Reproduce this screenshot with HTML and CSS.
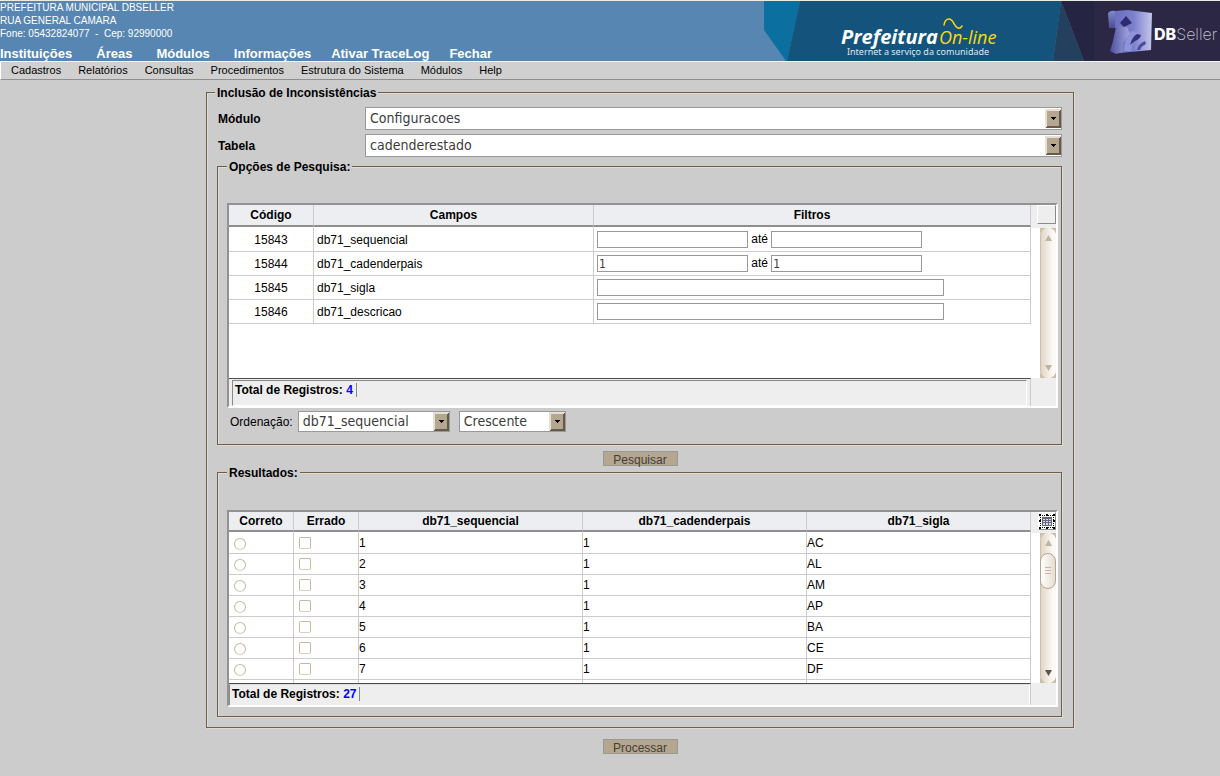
FILE: index.html
```
<!DOCTYPE html>
<html lang="pt-BR">
<head>
<meta charset="utf-8">
<title>DBSeller - Inclusão de Inconsistências</title>
<link rel="stylesheet" href="styles.css">
</head>
<body>
<header class="top">
  <div class="top-left">
    <address class="org">PREFEITURA MUNICIPAL DBSELLER<br>RUA GENERAL CAMARA<br>Fone: 05432824077 &nbsp;- &nbsp;Cep: 92990000</address>
    <nav class="nav-main">
      <a class="wide" href="#">Instituições</a><a class="wide" href="#">Áreas</a><a class="wide" href="#">Módulos</a><a href="#">Informações</a><a href="#">Ativar TraceLog</a><a href="#">Fechar</a>
    </nav>
  </div>
  <svg class="banner" width="456" height="60" viewBox="0 0 456 60" role="img" aria-label="Prefeitura On-line DBSeller">
    <defs>
      <linearGradient id="face" x1="0" y1="0" x2="1" y2="0">
        <stop offset="0" stop-color="#6a6fc0"/><stop offset=".5" stop-color="#7c80cc"/><stop offset="1" stop-color="#c3c6ec"/>
      </linearGradient>
      <linearGradient id="side" x1="0" y1="0" x2="0" y2="1">
        <stop offset="0" stop-color="#8387cb"/><stop offset="1" stop-color="#4a4d90"/>
      </linearGradient>
      <linearGradient id="foot" x1="0" y1="0" x2="1" y2="0">
        <stop offset="0" stop-color="#4a4f9e"/><stop offset="1" stop-color="#a5a9e0"/>
      </linearGradient>
    </defs>
    <path d="M0 0H36L23 60H22L0 29Z" fill="#0b6fa0"/>
    <path d="M36 0H297L289 60H23Z" fill="#14547c"/>
    <path d="M297 0L320 60H289Z" fill="#24405f"/>
    <path d="M297 0H456V60H320Z" fill="#262443"/>
    <path d="M330 0H456V60H330Z" fill="#2c2745"/>
    <path d="M344 12Q346 9 352 10V27L345 27Z" fill="url(#side)"/>
    <path d="M351 10L364 9L388 12L387 49L356 52L355 33L351 26Z" fill="url(#face)"/>
    <path d="M352 26L363 26L366 33L359 42V51L352 53L346 50L349 40Z" fill="url(#foot)"/>
    <path d="M356 22L362 15L368 22L360 26Z" fill="#2e2a72"/>
    <path d="M360 50Q360 38 368 30L377 32Q368 40 367 50Z" fill="#8f93d8"/>
    <path d="M366 44Q368 36 373 33L377 34Q376 38 371 40Z" fill="#34327c"/>
    <path d="M373 49Q374 43 381 40L382 43Q377 45 376 49Z" fill="#4b4d9d"/>
    <text class="brand-a" x="77" y="43">Prefeitura</text>
    <text class="brand-b" x="175" y="43">On-line</text>
    <path d="M180 24Q181 18 185 18C190 18 189 25 194 27Q196 28 198 25" fill="none" stroke="#fbd90f" stroke-width="1.5" stroke-linecap="round"/>
    <text class="brand-c" x="83" y="54">Internet a serviço da comunidade</text>
    <text class="brand-d" x="390" y="39"><tspan class="db">DB</tspan><tspan class="seller">Seller</tspan></text>
  </svg>
</header>
<nav class="nav-sub">
  <a href="#">Cadastros</a><a href="#">Relatórios</a><a href="#">Consultas</a><a href="#">Procedimentos</a><a href="#">Estrutura do Sistema</a><a href="#">Módulos</a><a href="#">Help</a>
</nav>
<main class="page">
  <form class="form">
    <fieldset class="box box-outer">
      <legend>Inclusão de Inconsistências</legend>
      <div class="fields">
        <label for="modulo">Módulo</label>
        <select id="modulo"><option>Configuracoes</option></select>
        <label for="tabela">Tabela</label>
        <select id="tabela"><option>cadenderestado</option></select>
      </div>

      <fieldset class="box box-search">
        <legend>Opções de Pesquisa:</legend>
        <div class="grid grid-search">
          <div class="grid-view">
            <div class="grid-clip">
              <table>
                <colgroup><col class="c-code"><col class="c-field"><col></colgroup>
                <thead><tr><th>Código</th><th>Campos</th><th>Filtros</th></tr></thead>
                <tbody>
                  <tr><td>15843</td><td>db71_sequencial</td><td><input type="text" aria-label="db71_sequencial de"> até <input type="text" aria-label="db71_sequencial até"></td></tr>
                  <tr><td>15844</td><td>db71_cadenderpais</td><td><input type="text" value="1" aria-label="db71_cadenderpais de"> até <input type="text" value="1" aria-label="db71_cadenderpais até"></td></tr>
                  <tr><td>15845</td><td>db71_sigla</td><td><input class="long" type="text" aria-label="db71_sigla"></td></tr>
                  <tr><td>15846</td><td>db71_descricao</td><td><input class="long" type="text" aria-label="db71_descricao"></td></tr>
                </tbody>
              </table>
            </div>
            <div class="grid-side">
              <div class="corner"><button type="button" class="pick" aria-label="Colunas"></button></div>
              <div class="scroll">
                <svg width="7" height="6" viewBox="0 0 7 6"><path d="M3.500 0L7 6H0Z"/></svg>
                <svg width="7" height="6" viewBox="0 0 7 6"><path d="M3.500 6L7 0H0Z"/></svg>
              </div>
            </div>
          </div>
          <div class="grid-foot"><div class="foot-area"><div class="foot-box"><span class="total">Total de Registros: <b>4</b></span></div></div></div>
        </div>
        <div class="order">
          <label for="ordem">Ordenação:</label>
          <select id="ordem" class="by"><option>db71_sequencial</option></select>
          <select class="dir" aria-label="Sentido"><option>Crescente</option></select>
        </div>
      </fieldset>

      <div class="action action-inner"><button type="button" class="btn">Pesquisar</button></div>

      <fieldset class="box box-result">
        <legend>Resultados:</legend>
        <div class="grid grid-result">
          <div class="grid-view">
            <div class="grid-clip">
              <table>
                <colgroup><col class="c-mark"><col class="c-mark"><col><col><col></colgroup>
                <thead><tr><th>Correto</th><th>Errado</th><th>db71_sequencial</th><th>db71_cadenderpais</th><th>db71_sigla</th></tr></thead>
                <tbody>
                  <tr><td><input type="radio" name="r1" aria-label="Correto 1"></td><td><input type="checkbox" aria-label="Errado 1"></td><td>1</td><td>1</td><td>AC</td></tr>
                  <tr><td><input type="radio" name="r2" aria-label="Correto 2"></td><td><input type="checkbox" aria-label="Errado 2"></td><td>2</td><td>1</td><td>AL</td></tr>
                  <tr><td><input type="radio" name="r3" aria-label="Correto 3"></td><td><input type="checkbox" aria-label="Errado 3"></td><td>3</td><td>1</td><td>AM</td></tr>
                  <tr><td><input type="radio" name="r4" aria-label="Correto 4"></td><td><input type="checkbox" aria-label="Errado 4"></td><td>4</td><td>1</td><td>AP</td></tr>
                  <tr><td><input type="radio" name="r5" aria-label="Correto 5"></td><td><input type="checkbox" aria-label="Errado 5"></td><td>5</td><td>1</td><td>BA</td></tr>
                  <tr><td><input type="radio" name="r6" aria-label="Correto 6"></td><td><input type="checkbox" aria-label="Errado 6"></td><td>6</td><td>1</td><td>CE</td></tr>
                  <tr><td><input type="radio" name="r7" aria-label="Correto 7"></td><td><input type="checkbox" aria-label="Errado 7"></td><td>7</td><td>1</td><td>DF</td></tr>
                  <tr><td></td><td></td><td></td><td></td><td></td></tr>
                </tbody>
              </table>
            </div>
            <div class="grid-side">
              <div class="corner"><button type="button" class="pick" aria-label="Colunas">
                <svg width="16" height="15" viewBox="0 0 16 15" shape-rendering="crispEdges">
                  <rect width="16" height="15" fill="#fff"/>
                  <path d="M3 1.500H14M3 13.500H14" stroke="#000" stroke-dasharray="1 1"/>
                  <path d="M1.500 3V12M14.500 3V12" stroke="#000" stroke-dasharray="1 1"/>
                  <path d="M0 0h2v2H0zM14 0h2v2h-2zM0 13h2v2H0zM14 13h2v2h-2zM7 0h2v2H7zM7 13h2v2H7zM0 6h2v2H0zM14 6h2v2h-2z"/>
                  <rect x="3" y="3" width="10" height="9" fill="#667"/>
                  <path d="M4 5h2v1H4zM7 5h2v1H7zM10 5h2v1h-2zM4 7h2v1H4zM7 7h2v1H7zM10 7h2v1h-2zM4 9h2v2H4zM7 9h2v2H7zM10 9h2v2h-2z" fill="#dde"/>
                </svg></button></div>
              <div class="scroll">
                <svg class="up" width="7" height="6" viewBox="0 0 7 6"><path d="M3.500 0L7 6H0Z"/></svg>
                <div class="thumb"></div>
                <svg class="down" width="7" height="6" viewBox="0 0 7 6"><path d="M3.500 6L7 0H0Z"/></svg>
              </div>
            </div>
          </div>
          <div class="grid-foot"><div class="foot-area"><div class="foot-box"><span class="total">Total de Registros: <b>27</b></span></div></div></div>
        </div>
      </fieldset>
    </fieldset>
    <div class="action action-last"><button type="button" class="btn">Processar</button></div>
  </form>
</main>
</body>
</html>
```
FILE: styles.css
```
* { box-sizing: border-box; }

body {
  margin: 0;
  background: #ccc;
  color: #000;
  font: 12px/14px "Liberation Sans", Arial, sans-serif;
}

a { color: inherit; text-decoration: none; }

/* top bar */
.top {
  display: flex;
  justify-content: space-between;
  height: 62px;
  background: #5786b2;
  border-top: 1px solid #ecebe0;
  border-bottom: 1px solid #f4f4f4;
  color: #fff;
  overflow: hidden;
}
.top-left { white-space: nowrap; }
.org { font: normal 10px/13px "Liberation Sans", Arial, sans-serif; }
.nav-main {
  display: flex;
  gap: 20px;
  margin-top: 6px;
  font-size: 13px;
  line-height: 16px;
  font-weight: bold;
}
.nav-main .wide { margin-right: 4px; }
.banner { display: block; flex: none; }
.brand-a { font: italic bold 20px "Open Sans", sans-serif; fill: #fff; }
.brand-b { font: italic 18px "Open Sans", sans-serif; fill: #fbd90f; }
.brand-c { font: 9px "Noto Sans", sans-serif; fill: #dce8f0; }
.brand-d { font: 16px Inter, sans-serif; }
.db { font-weight: 800; fill: #fff; }
.seller { font-weight: 200; fill: #c8c6d4; }

.nav-sub {
  display: flex;
  gap: 17px;
  padding: 1px 10px 2px;
  background: #d0d0d0;
  border-left: 1px solid #fff;
  border-bottom: 1px solid #909090;
  font-size: 11px;
}

/* page */
.page { padding: 6px 0 21px 60px; }
.form { max-width: 868px; margin: 0 auto; }

.box {
  min-width: 0;
  margin: 0;
  border: 1px solid #6b5f4f;
  box-shadow: 1px 1px 0 #e2dccf, inset 1px 1px 0 #e2dccf;
}
.box legend {
  height: 13px;
  padding: 0 2px;
  background: #ccc;
  font-weight: bold;
  line-height: 15px;
}
.box-outer { padding: 8px 11px 10px 10px; }
.box-outer > legend { margin-left: -2px; }
.box-search { margin-top: 3px; padding: 30px 3px 12px 9px; }
.box-result { padding: 31px 3px 9px 9px; }

.fields {
  display: grid;
  grid-template-columns: 147px 1fr;
  row-gap: 4px;
  align-items: center;
  padding-left: 1px;
  font-weight: bold;
}

select {
  appearance: none;
  height: 23px;
  margin: 0;
  padding: 0 20px 2px 4px;
  border: 1px solid #999;
  border-radius: 0;
  color: #3c3c3c;
  font: 14px/18px "DejaVu Sans Condensed", "DejaVu Sans", sans-serif;
  background: #fff url("data:image/svg+xml,%3Csvg xmlns='http://www.w3.org/2000/svg' width='16' height='19' shape-rendering='crispEdges'%3E%3Cpath fill='%23b5a690' d='M0 0h16v19H0z'/%3E%3Cpath fill='%23e6dfd3' d='M0 0h16l-2 2H2v15l-2 2z'/%3E%3Cpath fill='%23665a4a' d='M16 0v19H0l2-2h12V2z'/%3E%3Cpath d='M6 8h5v1H6zM7 9h3v1H7zM8 10h1v1H8z'/%3E%3C/svg%3E") right center no-repeat;
}

/* data grids */
.grid {
  border: 2px solid #fff;
  border-top-color: #929292;
  border-left-color: #929292;
  background: #fff;
}
.grid-view { display: flex; }
.grid-clip { flex: 1; min-width: 0; overflow: hidden; }
.grid-search .grid-clip { height: 173px; }
.grid-result .grid-clip { height: 171px; }
.grid-side { display: flex; flex-direction: column; width: 25px; }

table {
  width: 100%;
  table-layout: fixed;
  border-collapse: separate;
  border-spacing: 0;
}
.c-code { width: 85px; }
.c-field { width: 280px; }
.c-mark { width: 65px; }
th {
  height: 22px;
  padding: 0;
  background: #edeef2;
  border-right: 1px solid #ccc;
  border-bottom: 2px solid #8f8f8f;
}
.grid-result th { height: 20px; }
td {
  height: 24px;
  padding: 0 3px;
  border-right: 1px solid #ccc;
  border-bottom: 1px solid #ccc;
}
.grid-search td:first-child { text-align: center; }
.grid-search tr:first-child td { height: 25px; border-top: 1px solid #fff; }
.grid-result td { height: 21px; padding: 0; }
.grid-result tr:first-child td { height: 22px; border-top: 1px solid #fff; }

input[type="text"] {
  width: 151px;
  height: 17px;
  margin: 0;
  padding: 0 1px;
  border: 1px solid #999;
  border-radius: 0;
  background: #fff;
  color: #3c3c3c;
  font: 12px/14px "DejaVu Sans Condensed", "DejaVu Sans", sans-serif;
  vertical-align: middle;
}
input[type="text"].long { width: 347px; }

input[type="radio"],
input[type="checkbox"] {
  appearance: none;
  display: block;
  width: 12px;
  height: 12px;
  margin: 0 5px;
  border: 1px solid #c4b8a5;
  border-bottom-color: #d8cfc0;
  border-radius: 2px;
  background: #fff;
}
input[type="radio"] { margin-top: 2px; border-radius: 50%; }

.corner {
  display: flex;
  justify-content: flex-end;
  height: 23px;
  background: #eee;
}
.grid-result .corner { height: 21px; }
.pick {
  display: flex;
  align-items: center;
  justify-content: center;
  width: 19px;
  height: 19px;
  padding: 0;
  border: 1px solid #fff;
  border-right-color: #8a8a8a;
  border-bottom-color: #8a8a8a;
  background: #eee;
}
.grid-result .pick { width: 18px; height: 18px; }
.pick svg { flex: none; }

.scroll {
  flex: 1;
  display: flex;
  flex-direction: column;
  align-items: center;
  justify-content: space-between;
  width: 16px;
  margin-left: 9px;
  padding: 7px 0 7px;
  border-left: 1px solid #cbbfa8;
  border-radius: 8px;
  background: linear-gradient(90deg, #e2d7c8, #fbf9f6 80%);
  box-shadow: 0 0 0 8px #cbbfa8;
  clip-path: inset(0);
  fill: #c0b49e;
}
.scroll .up { margin-bottom: 7px; }
.scroll .down { margin-top: auto; fill: #5c554b; }
.thumb {
  width: 16px;
  height: 36px;
  margin-left: -1px;
  border: 1px solid #b5a690;
  border-radius: 8px;
  background:
    linear-gradient(#c5b9a5, #c5b9a5) center 13px / 6px 1px no-repeat,
    linear-gradient(#c5b9a5, #c5b9a5) center 16px / 6px 1px no-repeat,
    linear-gradient(#c5b9a5, #c5b9a5) center 19px / 6px 1px no-repeat,
    linear-gradient(90deg, #fff, #e6ddcf);
}

.grid-foot { padding-right: 25px; background: #eee; }
.foot-area {
  border-top: 1px solid #4c4c4c;
  border-right: 1px solid #ccc;
}
.foot-box {
  padding: 2px;
  border: 1px solid #fff;
  border-top-color: #8a8a8a;
  border-left-color: #8a8a8a;
}
.grid-search .foot-area { padding: 1px 3px 0; }
.grid-search .foot-box { height: 26px; }
.grid-result .foot-box {
  height: 21px;
  border-top-color: #ddd;
  border-bottom: 0;
}
.total {
  display: inline-block;
  padding-right: 3px;
  border-right: 1px solid #888;
  font-weight: bold;
}
.total b { color: #00f; }

.order {
  display: flex;
  align-items: center;
  padding: 3px 0 0 3px;
}
.order select { height: 21px; }
.order .by { width: 152px; margin: 0 9px 0 5px; }
.order .dir { width: 107px; }

/* buttons */
.action { display: flex; justify-content: center; padding-top: 6px; }
.action-inner { padding-left: 1px; }
.action-last { padding-top: 11px; }
.btn {
  width: 75px;
  height: 15px;
  padding: 2px 0 0;
  border: 1px solid #999;
  background: #b5a690;
  color: #443e38;
  font: 12px/12px "Liberation Sans", Arial, sans-serif;
}
```
